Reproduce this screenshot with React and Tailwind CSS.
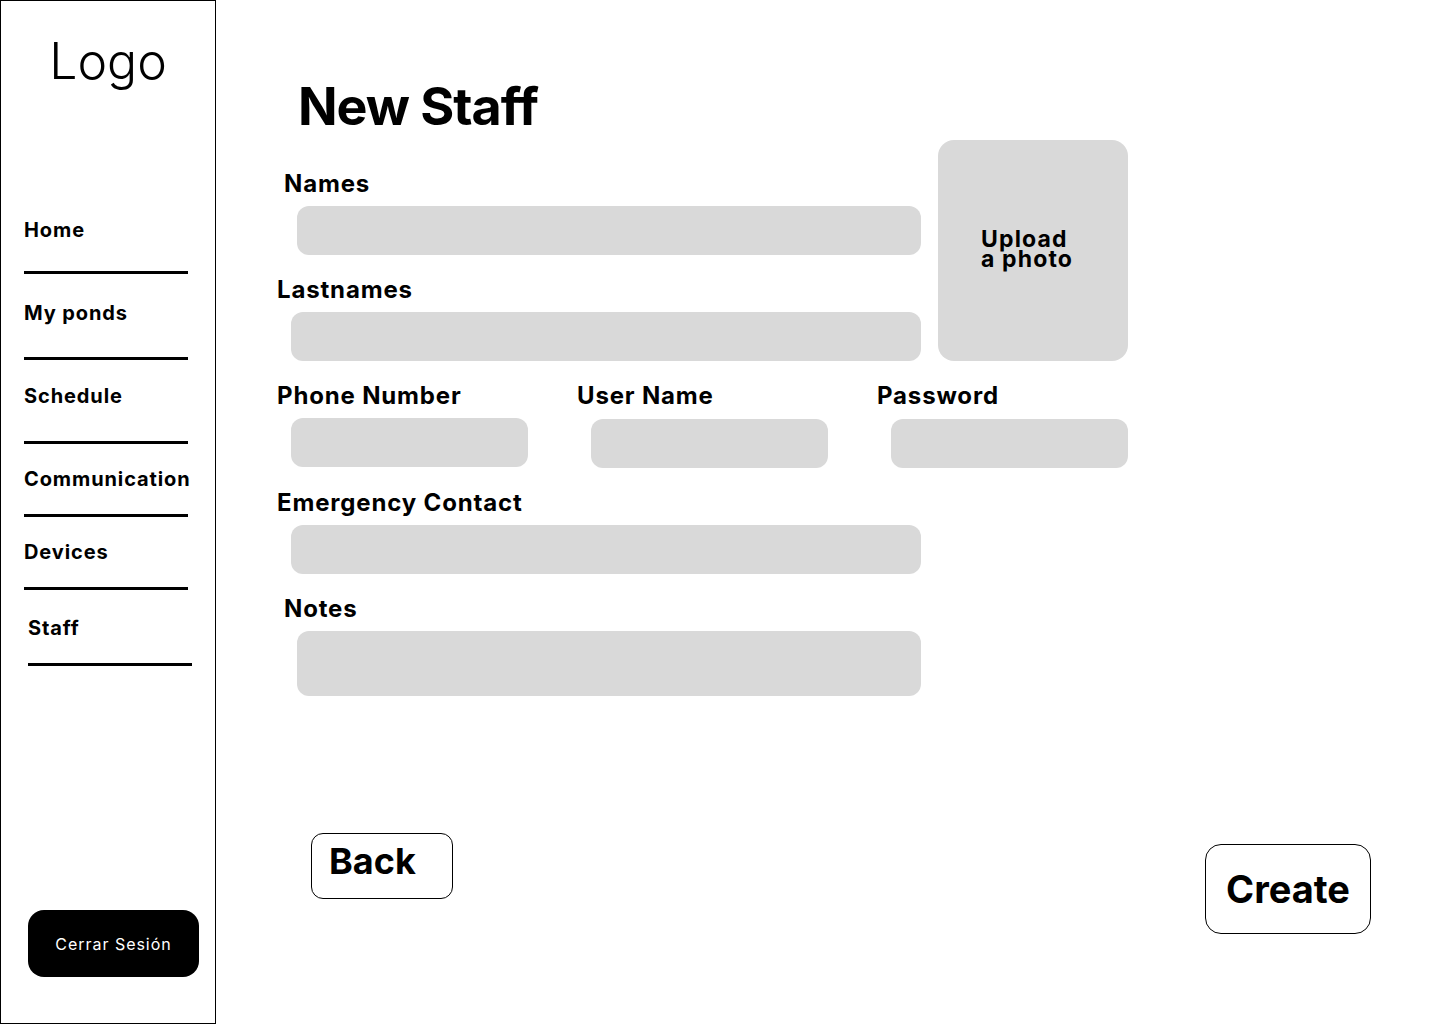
import React from 'react';

const navItems = [
  { label: 'Home', textClass: 'mt-[134px] ml-[23px]', lineClass: 'mt-[31px] ml-[23px] w-[164px]' },
  { label: 'My ponds', textClass: 'mt-[29px] ml-[23px]', lineClass: 'mt-[34px] ml-[23px] w-[164px]' },
  { label: 'Schedule', textClass: 'mt-[26px] ml-[23px]', lineClass: 'mt-[35px] ml-[23px] w-[164px]' },
  { label: 'Communication', textClass: 'mt-[25px] ml-[23px]', lineClass: 'mt-[25px] ml-[23px] w-[164px]' },
  { label: 'Devices', textClass: 'mt-[25px] ml-[23px]', lineClass: 'mt-[25px] ml-[23px] w-[164px]' },
  { label: 'Staff', textClass: 'mt-[28px] ml-[27px]', lineClass: 'mt-[25px] ml-[27px] w-[164px]' },
];

const Label = ({ children, className = '' }) => (
  <div className={`text-[24px] leading-none font-bold tracking-[0.035em] ${className}`}>{children}</div>
);

const Field = ({ className = '' }) => (
  <div className={`bg-[#d9d9d9] rounded-xl ${className}`} />
);

const Sidebar = () => (
  <aside className="w-[216px] h-[1024px] shrink-0 border border-black flex flex-col">
    <div className="mt-[35px] text-center text-[50px] leading-none font-light">Logo</div>
    <nav className="flex flex-col">
      {navItems.map((item) => (
        <div key={item.label}>
          <div className={`text-[20px] leading-none font-bold tracking-[0.045em] ${item.textClass}`}>{item.label}</div>
          <div className={`h-[3px] bg-black ${item.lineClass}`} />
        </div>
      ))}
    </nav>
    <div className="mt-auto mb-[46px] ml-[27px]">
      <button className="w-[171px] h-[67px] bg-black text-white rounded-2xl text-[16px] tracking-[0.06em]">
        Cerrar Sesión
      </button>
    </div>
  </aside>
);

const App = () => {
  return (
    <div className="flex bg-white text-black min-h-screen" style={{ fontFamily: 'Inter, "Liberation Sans", sans-serif' }}>
      <Sidebar />

      <main className="flex-1 pt-[78px] pl-[61px]">
        <h1 className="mt-[3px] ml-[21px] text-[52px] leading-none font-bold tracking-[-0.02em]">New Staff</h1>

        <div className="mt-[7px] flex items-start">
          <div className="w-[644px] pt-[32px]">
            <Label className="ml-[7px]">Names</Label>
            <Field className="mt-[10px] ml-[20px] w-[624px] h-[49px]" />
            <Label className="mt-[23px]">Lastnames</Label>
            <Field className="mt-[10px] ml-[14px] w-[630px] h-[49px]" />
          </div>
          <div className="ml-[17px] w-[190px] h-[221px] bg-[#d9d9d9] rounded-2xl flex items-center">
            <div className="ml-[43px] -mt-[4px] text-[23px] leading-[20px] font-bold tracking-[0.05em]">
              Upload<br />a photo
            </div>
          </div>
        </div>

        <div className="mt-[23px] grid grid-cols-[300px_300px_300px]">
          <div>
            <Label>Phone Number</Label>
            <Field className="mt-[10px] ml-[14px] w-[237px] h-[49px]" />
          </div>
          <div>
            <Label>User Name</Label>
            <Field className="mt-[11px] ml-[14px] w-[237px] h-[49px]" />
          </div>
          <div>
            <Label>Password</Label>
            <Field className="mt-[11px] ml-[14px] w-[237px] h-[49px]" />
          </div>
        </div>

        <Label className="mt-[23px]">Emergency Contact</Label>
        <Field className="mt-[10px] ml-[14px] w-[630px] h-[49px]" />

        <Label className="mt-[23px] ml-[7px]">Notes</Label>
        <Field className="mt-[10px] ml-[20px] w-[624px] h-[65px]" />

        <div className="mt-[137px] ml-[34px] w-[1060px] flex justify-between items-start">
          <button className="w-[142px] h-[66px] border border-black rounded-xl flex items-start pl-[17px] pt-[9px]">
            <span className="block text-[36px] leading-none font-bold">Back</span>
          </button>
          <button className="mt-[11px] w-[166px] h-[90px] border border-black rounded-2xl flex items-center justify-center">
            <span className="text-[38px] leading-none font-bold">Create</span>
          </button>
        </div>
      </main>
    </div>
  );
};

export default App;
